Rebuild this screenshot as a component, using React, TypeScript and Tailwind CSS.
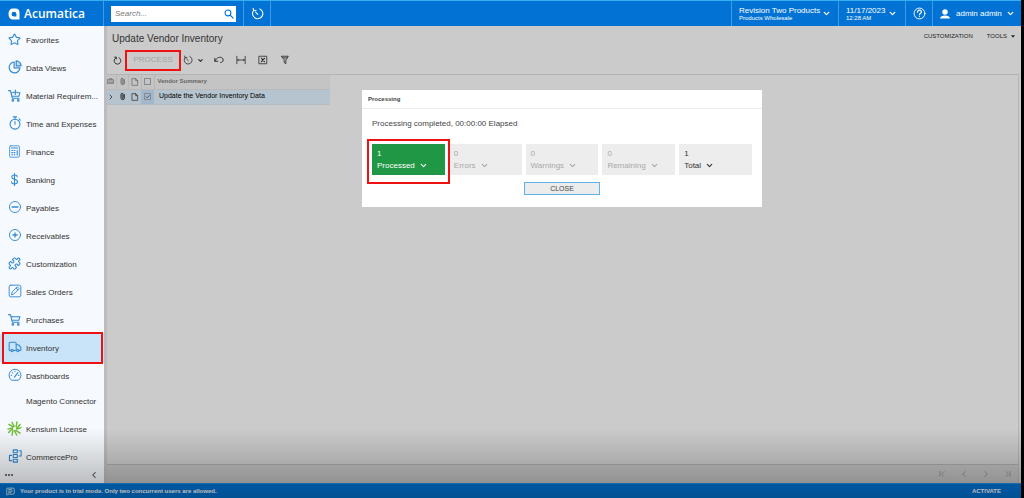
import type { ReactNode } from 'react';
import {
  ChevronDown,
  ChevronFirst,
  ChevronLast,
  ChevronLeft,
  ChevronRight,
  MessageSquareText,
  Paperclip,
  Puzzle,
  Star,
  Truck,
} from 'lucide-react';

function Svg({ children, className = 'size-3', width = 1.5 }: { children: ReactNode; className?: string; width?: number }) {
  return (
    <svg
      viewBox="0 0 24 24"
      className={className}
      fill="none"
      stroke="currentColor"
      strokeWidth={width}
      strokeLinecap="round"
      strokeLinejoin="round"
      aria-hidden="true"
    >
      {children}
    </svg>
  );
}

const lucide = { className: 'size-[13px]', strokeWidth: 2 };

const PieIcon = () => (
  <Svg className="size-[14px]" width={2}>
    <path d="M10.500 3.500a9.300 9.300 0 1 0 10 10H10.500z" />
    <path d="M14 1.500a8.500 8.500 0 0 1 8.500 8.500H14z" fill="currentColor" fillOpacity="0.25" />
  </Svg>
);

const GaugeIcon = () => (
  <Svg className="size-[14px]" width={1.7}>
    <path d="M5.500 20.500a10.300 10.300 0 1 1 13 0z" />
    <path d="M11 15.500L17 8M5.500 12.500h.5M12 5.500V6M7.500 8l.3.300M18 12.500h.5" strokeWidth="2" />
  </Svg>
);

const CartIcon = ({ plus = false }: { plus?: boolean }) => (
  <Svg className="size-[13px]" width={2}>
    <path d="M1 3h3.500l3.500 14h12.500M6 7h3M18 7h4l-2 6.500H7.500" />
    {plus ? <path d="M13.500 2v8M9.800 6h7.400" /> : <path d="M9 7h9" />}
    <circle cx="9" cy="21" r="1.500" />
    <circle cx="19" cy="21" r="1.500" />
  </Svg>
);

const TimerIcon = () => (
  <Svg className="size-[14px]" width={1.8}>
    <circle cx="12" cy="14" r="8.500" />
    <path d="M9 1.500h6M12 2v3.500M12 9v5M19 5l2 2" />
  </Svg>
);

const FinanceIcon = () => (
  <Svg className="size-[13px]" width={1.5}>
    <rect x="3" y="1.500" width="18" height="21" rx="2" />
    <path d="M6.500 5.500h11M7 10h1.500M11.300 10h1.500M7 14h1.500M11.300 14h1.500M7 18h1.500M11.300 18h1.500M17 10v8.500" strokeWidth="2" />
  </Svg>
);

const DollarIcon = () => (
  <Svg className="size-[13px]" width={2}>
    <path d="M12 1v22M17 7c0-2-2-3.200-5-3.200S7 5.200 7 7.500c0 5.500 10.500 3 10.500 8.700 0 2.300-2.200 4-5.500 4s-5.500-1.500-5.500-4" />
  </Svg>
);

const CircleIcon = ({ plus = false }: { plus?: boolean }) => (
  <Svg className="size-[14px]" width={1.6}>
    <circle cx="12" cy="12" r="9.500" />
    <path d={plus ? 'M8.500 12h7M12 8.500v7' : 'M7 12h10'} strokeWidth="2.2" />
  </Svg>
);

const EditIcon = () => (
  <Svg className="size-[14px]" width={1.6}>
    <rect x="2" y="2" width="20" height="20" rx="3" />
    <path d="M6 18l1.200-4.500L16 4.800l3.200 3.200-8.800 8.800zM14 7l3 3" />
  </Svg>
);

const KensiumIcon = () => (
  <Svg className="size-[15px] text-[#6dbb2f]" width={2.2}>
    <path d="M11.500 8.500L8 2M14.500 9.500L16 1.500M15.500 12L21 5.500M15.500 13l7 -2.500M14 15l7 4.500M12 15.500l3.500 7M9.500 14.500L8 22.500M8.500 12.500L2.500 18.500M8.500 11L1.500 13M10 9.500L3 5.500" />
  </Svg>
);

const CommerceIcon = () => (
  <Svg className="size-[14px]" width={1.9}>
    <rect x="9" y="1.500" width="7" height="5" />
    <rect x="9" y="9.500" width="7" height="5" />
    <rect x="9" y="17.500" width="7" height="5" />
    <path d="M19 3h3.500v9H19M6 11H2.500v9H6" />
  </Svg>
);

const PageIcon = () => (
  <Svg className="size-2" width={2.2}>
    <path d="M4 2h10l6 6v14H4zM14 2v6h6" />
  </Svg>
);

const ClockIcon = ({ className }: { className: string }) => (
  <Svg className={className} width={2}>
    <path d="M16.500 3.500a9.500 9.500 0 1 1-11.500 2.500M4 2.500l1 4.500 4.500-1M12.500 13.500L8.500 9.500" />
  </Svg>
);

type Item = { label: string; icon?: ReactNode; current?: boolean };

const items: Item[] = [
  { label: 'Favorites', icon: <Star {...lucide} /> },
  { label: 'Data Views', icon: <PieIcon /> },
  { label: 'Material Requirem...', icon: <CartIcon plus /> },
  { label: 'Time and Expenses', icon: <TimerIcon /> },
  { label: 'Finance', icon: <FinanceIcon /> },
  { label: 'Banking', icon: <DollarIcon /> },
  { label: 'Payables', icon: <CircleIcon /> },
  { label: 'Receivables', icon: <CircleIcon plus /> },
  { label: 'Customization', icon: <Puzzle {...lucide} /> },
  { label: 'Sales Orders', icon: <EditIcon /> },
  { label: 'Purchases', icon: <CartIcon /> },
  { label: 'Inventory', icon: <Truck className="size-[14px]" strokeWidth={1.8} />, current: true },
  { label: 'Dashboards', icon: <GaugeIcon /> },
  { label: 'Magento Connector' },
  { label: 'Kensium License', icon: <KensiumIcon /> },
  { label: 'CommercePro', icon: <CommerceIcon /> },
];

const results = [
  { count: 1, label: 'Processed', tone: 'bg-[#209744] text-white' },
  { count: 0, label: 'Errors', tone: 'bg-[#ededed] text-[#a8a8a8]' },
  { count: 0, label: 'Warnings', tone: 'bg-[#ededed] text-[#a8a8a8]' },
  { count: 0, label: 'Remaining', tone: 'bg-[#ededed] text-[#a8a8a8]' },
  { count: 1, label: 'Total', tone: 'bg-[#ededed] text-[#333]' },
];

function Highlight({ className }: { className: string }) {
  return <span aria-hidden="true" className={`pointer-events-none absolute z-10 border-2 border-[#ee1111] ${className}`} />;
}

function Header() {
  return (
    <header className="flex h-[26px] shrink-0 items-stretch border-t border-[#35b0f2] bg-[#0273d4] text-white">
      <a href="#home" className="flex w-[104px] items-center gap-1 border-r border-[#3f9be6] pl-2">
        <svg viewBox="0 0 24 24" className="size-3" aria-hidden="true">
          <path fill="#fff" fillRule="evenodd" d="M10 1h5c5 0 8 3 8 8v14H10C4 23 1 19 1 12S4 1 10 1zm2 6.500a4.800 4.800 0 1 0 0 9.600h4.800v-4.800A4.800 4.800 0 0 0 12 7.500z" />
        </svg>
        <span className="font-['Open_Sans',sans-serif] text-[12px] leading-4 font-semibold">Acumatica</span>
      </a>
      <div className="flex w-[140px] items-center border-r border-[#3f9be6] pl-[7px]">
        <label className="flex h-4 w-[125px] items-center bg-white pr-[2px] pl-1 text-[#0273d4]">
          <input type="search" aria-label="Search" placeholder="Search..." className="min-w-0 flex-1 text-[8px] italic outline-none placeholder:text-[#777]" />
          <Svg className="size-[10px]" width={2.6}>
            <circle cx="9.500" cy="9.500" r="7" />
            <path d="M15 15l7 7" />
          </Svg>
        </label>
      </div>
      <button type="button" aria-label="Recent" className="flex w-[27px] items-center justify-center border-r border-[#3f9be6]">
        <ClockIcon className="size-[13px]" />
      </button>
      <div className="flex-1" />
      <button type="button" className="flex w-[107px] items-center border-l border-[#3f9be6] pr-[7px] pl-[7px] text-left">
        <span className="flex-1">
          <span className="block text-[8px] leading-[9px]">Revision Two Products</span>
          <span className="block text-[6px] leading-[7px]">Products Wholesale</span>
        </span>
        <ChevronDown className="size-[9px]" strokeWidth={3.5} />
      </button>
      <button type="button" className="flex w-[67px] items-center border-l border-[#3f9be6] pr-2 pl-[7px] text-left">
        <span className="flex-1">
          <span className="block text-[8px] leading-[9px]">11/17/2023</span>
          <span className="block text-[6px] leading-[7px]">12:28 AM</span>
        </span>
        <ChevronDown className="size-[9px]" strokeWidth={3.5} />
      </button>
      <button type="button" aria-label="Help" className="flex w-[27px] items-center justify-center border-l border-[#3f9be6]">
        <Svg className="size-[13px]" width={1.8}>
          <circle cx="12" cy="12" r="10" />
          <path d="M8.500 9.500c0-5 7-4.500 7-.5 0 2.500-3.500 2.500-3.500 5.500M12 17.500v.2" strokeWidth="2.2" />
        </Svg>
      </button>
      <button type="button" className="flex w-[89px] items-center border-l border-[#3f9be6] pl-[6px]">
        <svg viewBox="0 0 24 24" className="size-3" fill="currentColor" aria-hidden="true">
          <circle cx="12" cy="8" r="5.500" />
          <path d="M2 21c0-4 5-6 10-6s10 2 10 6z" />
        </svg>
        <span className="ml-[5px] text-[8px]">admin admin</span>
        <ChevronDown className="ml-1 size-[9px]" strokeWidth={3.5} />
      </button>
    </header>
  );
}

function Sidebar() {
  return (
    <nav className="flex w-[104px] shrink-0 flex-col bg-[#f6f9fd] text-[8px] text-[#333]">
      <ul>
        {items.map(({ label, icon, current }) => (
          <li key={label} className={current ? 'relative bg-[#c9e3f8]' : ''}>
            <a href="#menu" className={`flex items-center gap-1 pl-[7px] whitespace-nowrap ${icon ? 'h-7' : 'h-[25px] pb-[3px]'}`}>
              <span className="flex w-[15px] justify-center pb-[2px] text-[#3389d3]">{icon}</span>
              <span className="pt-[2px]">{label}</span>
            </a>
            {current && <Highlight className="-top-[2px] right-[1px] -bottom-[2px] left-[2px]" />}
          </li>
        ))}
      </ul>
      <div className="mt-auto flex h-3 items-center justify-between pr-[5px] pb-[5px] pl-1 text-[#444]">
        <button type="button" aria-label="More items">
          <svg viewBox="0 0 10 4" className="h-1 w-[10px]" fill="currentColor" aria-hidden="true">
            <circle cx="2" cy="2" r="1" />
            <circle cx="5" cy="2" r="1" />
            <circle cx="8" cy="2" r="1" />
          </svg>
        </button>
        <button type="button" aria-label="Collapse menu">
          <ChevronLeft className="size-[10px]" strokeWidth={2.5} />
        </button>
      </div>
    </nav>
  );
}

function Toolbar() {
  return (
    <div className="flex h-6 items-center text-[#333]">
      <button type="button" aria-label="Refresh" className="ml-[6px]">
        <Svg className="size-[9px]" width={2.6}>
          <path d="M8 4.500A9 9 0 1 0 16 4.500M4 3h5v5" />
        </Svg>
      </button>
      <div className="relative ml-[3px] flex h-[21px] w-[56px] items-center justify-center">
        <button type="button" disabled className="text-[8px] text-[#a3a3a3]">PROCESS</button>
        <Highlight className="inset-0" />
      </div>
      <button type="button" aria-label="Schedule" className="ml-[2px] flex items-center gap-1">
        <ClockIcon className="size-[10px]" />
        <ChevronDown className="size-[7px]" strokeWidth={4} />
      </button>
      <button type="button" aria-label="Undo" className="ml-[10px]">
        <Svg className="size-[10px]" width={2.4}>
          <path d="M2 8v7h7M2 15C7 2 22 3 22 12c0 4-3 6-6 6" />
        </Svg>
      </button>
      <button type="button" aria-label="Fit columns" className="ml-3">
        <Svg className="size-[10px]" width={2}>
          <path d="M2 3v18M22 3v18M4 12h16M6 10l-2 2 2 2M18 10l2 2-2 2" />
        </Svg>
      </button>
      <button type="button" aria-label="Export" className="ml-3">
        <Svg className="size-[10px]" width={2}>
          <rect x="3" y="3" width="18" height="18" />
          <path d="M8.500 8l7 8M15.500 8l-7 8" strokeWidth="3" />
        </Svg>
      </button>
      <button type="button" aria-label="Filter" className="ml-3">
        <Svg className="size-[10px]" width={2.2}>
          <path d="M4 3h16l-6 9v9l-4-3v-6zM7 7h10" />
        </Svg>
      </button>
    </div>
  );
}

function Check({ label, checked = false }: { label: string; checked?: boolean }) {
  return (
    <label className="relative mx-auto flex size-[7px] items-center justify-center">
      <input type="checkbox" aria-label={label} defaultChecked={checked} className="peer size-[7px] appearance-none border border-[#858b91]" />
      <svg viewBox="0 0 8 8" className="pointer-events-none absolute size-[7px] opacity-0 peer-checked:opacity-100" fill="none" stroke="#35566f" aria-hidden="true">
        <path d="M2 4l1.500 1.500L6.500 2.500" />
      </svg>
    </label>
  );
}

function Grid() {
  return (
    <table className="w-[223px] table-fixed border-collapse text-[7px] text-[#333]">
      <colgroup>
        <col className="w-[9px]" />
        <col className="w-[12px]" />
        <col className="w-[13px]" />
        <col className="w-[13px]" />
        <col />
      </colgroup>
      <thead>
        <tr className="h-[14px] border-b border-[#b9b9b9] bg-[#c4c4c4] text-[#666]">
          <th className="border-r border-[#b8b8b8]">
            <Svg className="size-[7px]" width={2}>
              <path d="M2 5h20v14H2zM2 10h20M2 15h20M8 5V2h8v3" />
            </Svg>
          </th>
          <th className="border-r border-[#b8b8b8]"><Paperclip className="mx-auto size-[7px] -rotate-45" strokeWidth={2.5} /></th>
          <th className="border-r border-[#b8b8b8]"><div className="flex justify-center"><PageIcon /></div></th>
          <th className="border-r border-[#b8b8b8]"><Check label="Select all" /></th>
          <th className="pl-[3px] text-left text-[6px] font-bold">Vendor Summary</th>
        </tr>
      </thead>
      <tbody>
        <tr className="h-[15px] border-b border-[#b5bcc2] bg-[#b6c4cf]">
          <td><ChevronRight className="size-2" strokeWidth={2.5} /></td>
          <td><Paperclip className="mx-auto size-[7px] -rotate-45" strokeWidth={3} /></td>
          <td><div className="flex justify-center"><PageIcon /></div></td>
          <td className="bg-[#a2b8ca]"><Check label="Select row" checked /></td>
          <td className="pl-[5px] text-black">Update the Vendor Inventory Data</td>
        </tr>
      </tbody>
    </table>
  );
}

function ProcessingDialog() {
  return (
    <section role="dialog" aria-label="Processing" className="w-[400px] bg-white pb-3 text-[#444]">
      <h2 className="border-b border-[#ececec] px-[6px] text-[6px] leading-[18px] font-bold">Processing</h2>
      <div className="px-[10px] pt-2">
        <p className="text-[8px] leading-[14px]">Processing completed, 00:00:00 Elapsed</p>
        <div className="relative mt-[13px] flex gap-1">
          {results.map(({ count, label, tone }) => (
            <button key={label} type="button" className={`h-[31px] w-[73px] px-[5px] text-left text-[8px] leading-3 ${tone}`}>
              <span className="block">{count}</span>
              <span className="flex items-center gap-1">
                {label}
                <ChevronDown className="size-[9px]" strokeWidth={3} />
              </span>
            </button>
          ))}
          <Highlight className="-top-[5px] -bottom-[9px] -left-[5px] w-[83px]" />
        </div>
        <button type="button" className="mx-auto mt-[7px] block h-[13px] w-[76px] border border-[#62b2ea] bg-[#ececec] text-[7px] leading-[11px]">
          CLOSE
        </button>
      </div>
    </section>
  );
}

export default function App() {
  return (
    <div className="relative flex min-h-screen flex-col border-r-[3px] border-black bg-[#cbcbcb] font-['Liberation_Sans',Arial,sans-serif]">
      <Header />
      <div className="flex flex-1">
        <Sidebar />
        <main className="relative flex min-w-0 flex-1 flex-col border-l-[3px] border-[#bcbcbe]">
          <div className="flex h-[22px] items-center justify-between pr-[6px] pl-[5px]">
            <h1 className="pt-[3px] text-[10px] leading-4 text-[#333]">Update Vendor Inventory</h1>
            <div className="flex items-center gap-[14px] pb-[2px] text-[6px] text-[#222]">
              <button type="button">CUSTOMIZATION</button>
              <button type="button" className="flex items-center gap-1">
                TOOLS
                <svg viewBox="0 0 6 4" className="h-[3px] w-1" fill="currentColor" aria-hidden="true"><path d="M0 0h6L3 4z" /></svg>
              </button>
            </div>
          </div>
          <Toolbar />
          <div className="mt-[2px] mr-[2px] flex flex-1 flex-col border-t border-r border-[#b4b4b4]">
            <Grid />
            <div className="mt-auto flex h-[19px] items-center justify-end gap-3 border-t border-[#aaa] bg-[#bfc0bf] pr-[5px] text-[#8b8d8d]">
              <button type="button" aria-label="First page"><ChevronFirst className="size-[10px]" /></button>
              <button type="button" aria-label="Previous page"><ChevronLeft className="size-[10px]" /></button>
              <button type="button" aria-label="Next page"><ChevronRight className="size-[10px]" /></button>
              <button type="button" aria-label="Last page"><ChevronLast className="size-[10px]" /></button>
            </div>
          </div>
          <div className="absolute inset-x-0 top-16 flex justify-center pr-1">
            <ProcessingDialog />
          </div>
        </main>
      </div>
      <footer className="flex h-[15px] shrink-0 items-center border-t border-[#1f8be6] bg-[#0273d4] pr-5 pl-[6px] text-[7px] text-white">
        <MessageSquareText className="mr-[5px] size-[9px]" strokeWidth={2} />
        <p className="flex-1 text-[6px] font-bold">Your product is in trial mode. Only two concurrent users are allowed.</p>
        <button type="button" className="text-[6px] font-bold">ACTIVATE</button>
      </footer>
      <div aria-hidden="true" className="pointer-events-none absolute inset-x-0 bottom-0 h-[70px] bg-linear-to-b from-transparent to-black/30" />
    </div>
  );
}
